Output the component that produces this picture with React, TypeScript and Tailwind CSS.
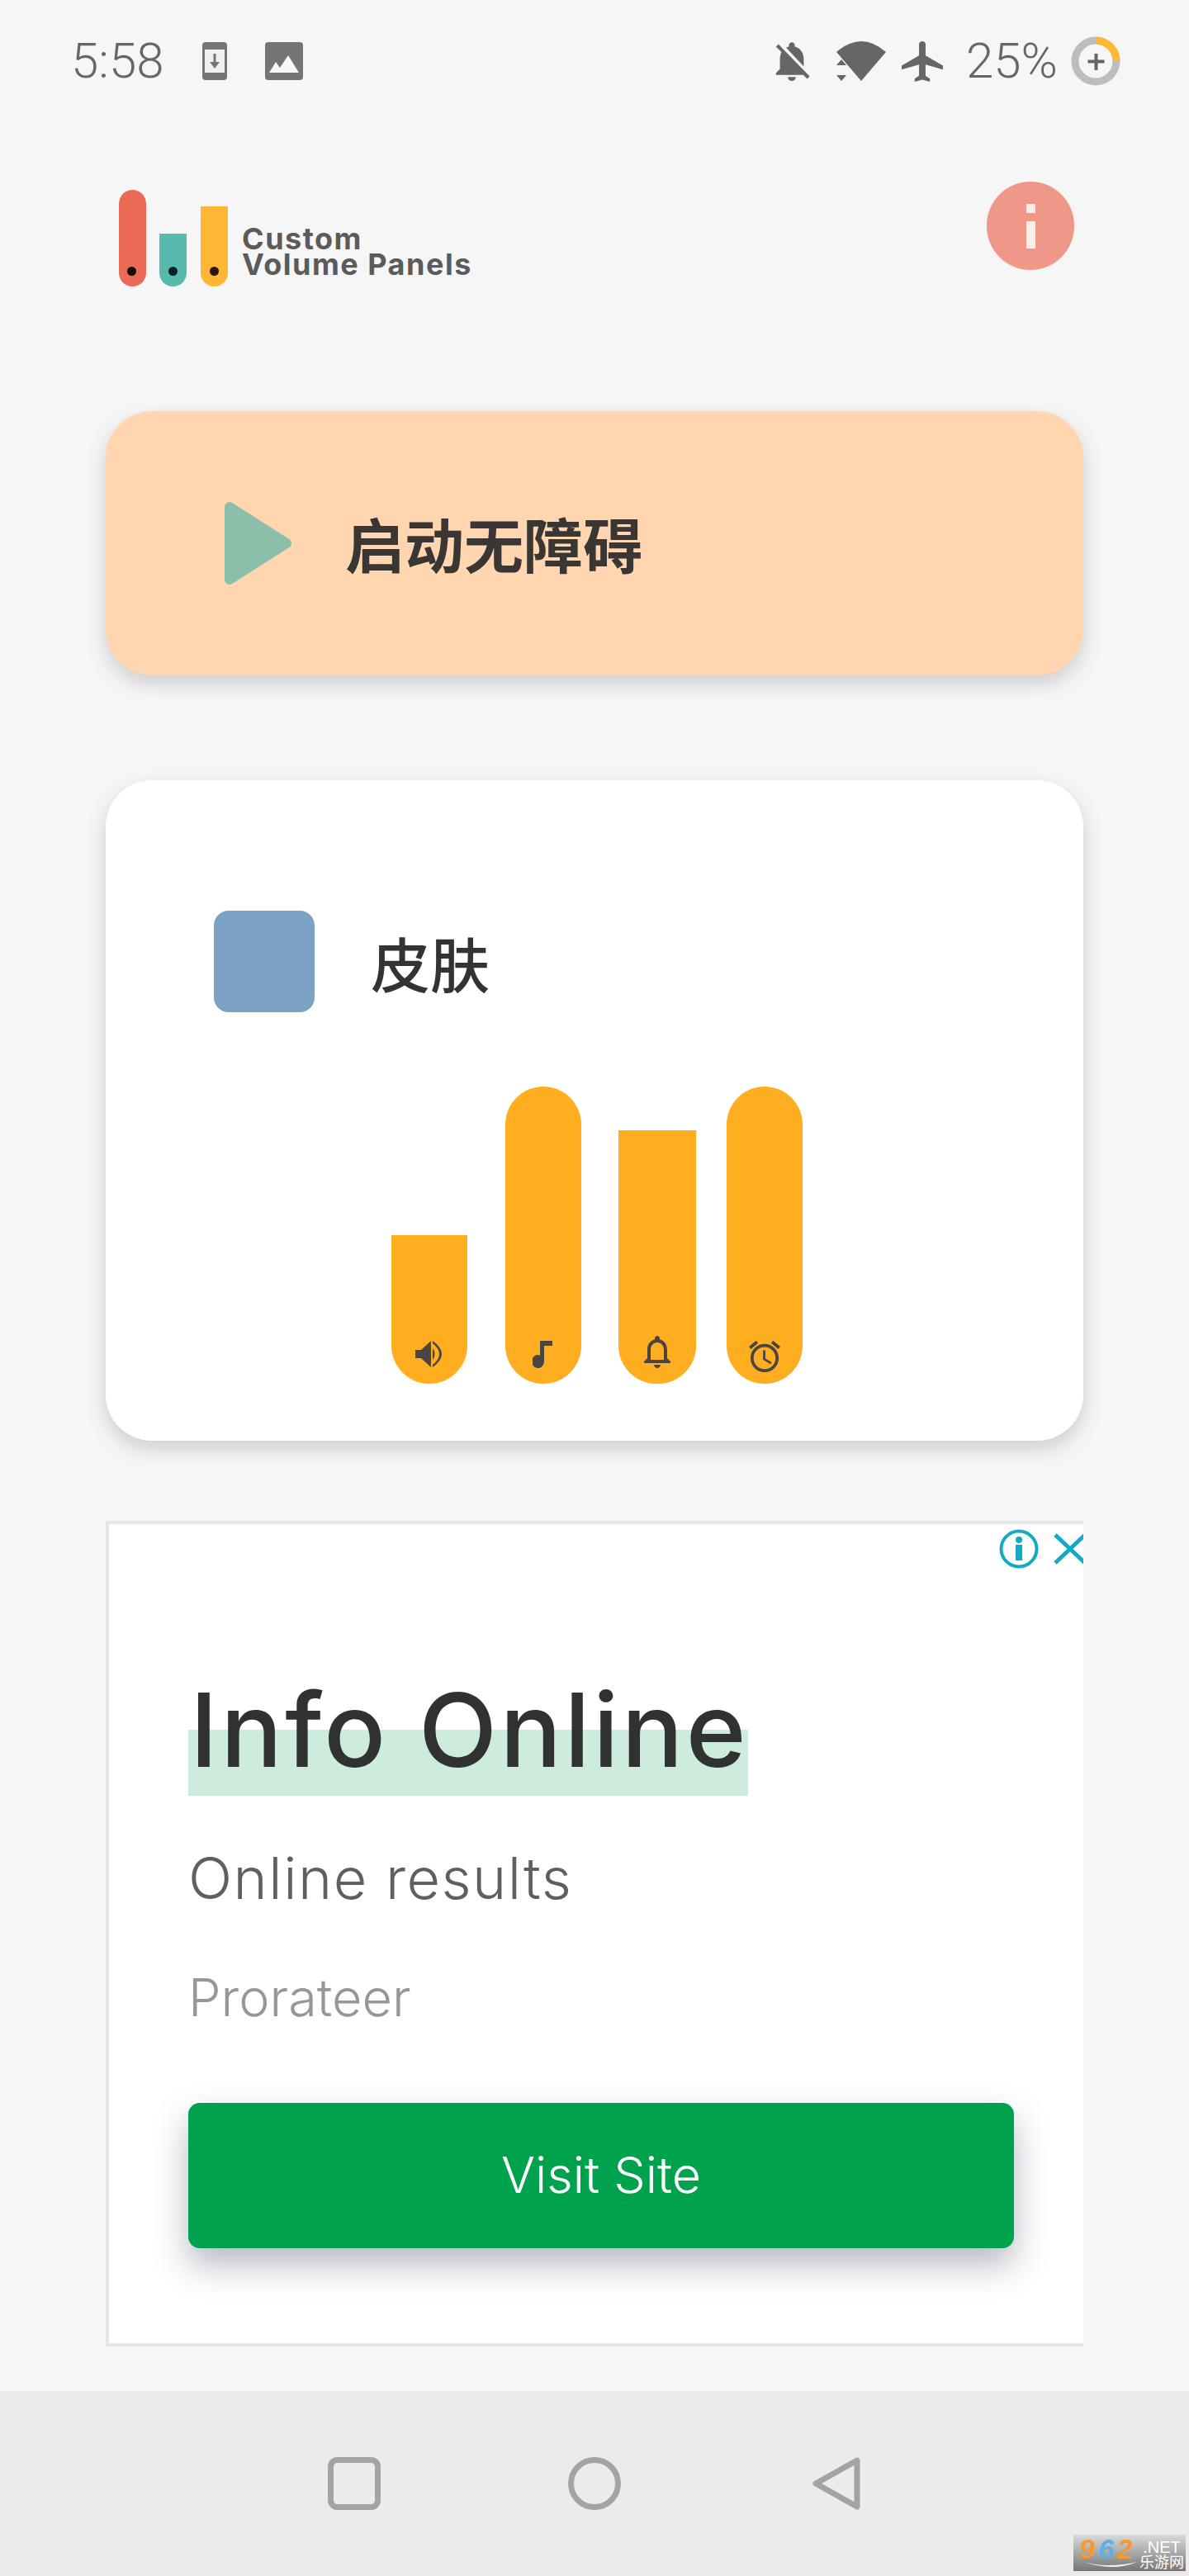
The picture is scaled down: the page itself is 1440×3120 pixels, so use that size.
const latin = "font-['Inter','Liberation_Sans',sans-serif]"

const Bar = ({ height, rounded, children, className }: { height: string; rounded: string; children: React.ReactNode; className: string }) => (
  <div className={`flex flex-col items-center justify-end bg-[#ffae1f] rounded-b-[46px] ${height} ${rounded} ${className}`}>{children}</div>
)

const StatusBar = () => (
  <div className="flex h-[148px] shrink-0 items-center pl-[86px] text-[#666666]">
    <span className="w-[111px] font-['Roboto',sans-serif] text-[60px] font-light leading-none">5:58</span>
    <svg className="ml-[48px]" width="30" height="46" viewBox="0 0 30 46">
      <rect width="30" height="46" rx="4" fill="#757575" />
      <rect x="3" y="9" width="24" height="28" fill="#f0f0f0" />
      <path d="M13.500 14h3v10h4.500L15 32l-6-8h4.500z" fill="#757575" />
    </svg>
    <svg className="ml-[46px]" width="46" height="46" viewBox="0 0 46 46">
      <rect width="46" height="46" rx="4" fill="#757575" />
      <path d="M5 37l8-13 5 7 10-15 13 21z" fill="#f7f7f7" />
    </svg>
    <svg className="ml-[568px]" width="48" height="48" viewBox="2 2 20 20" fill="#666666">
      <path d="M20 18.690L7.840 6.140 5.270 3.490 4 4.760l2.800 2.800v.01c-.52.99-.8 2.160-.8 3.420v5l-2 2v1h13.730l2 2L21 19.720l-1-1.030zM12 22c1.110 0 2-.89 2-2h-4c0 1.110.89 2 2 2zm6-7.320V11c0-3.080-1.640-5.640-4.500-6.320V4c0-.83-.67-1.500-1.500-1.500s-1.500.67-1.500 1.500v.68c-.15.03-.29.08-.42.12-.1.03-.2.07-.3.11h-.01c-.2.08-.4.17-.59.27-.01 0-.01 0-.02.01L18 14.680z" />
    </svg>
    <svg className="ml-[30px]" width="60" height="49" viewBox="0 0 60 49" fill="#666666">
      <path d="M0 13Q30 -13 60 13L30 48z" />
      <path d="M0 29h12l-6-7zM0 41h12l-6 7z" />
    </svg>
    <svg className="ml-[19px]" width="50" height="49" viewBox="2 2 19 20" preserveAspectRatio="none" fill="#666666">
      <path d="M21 16v-2l-8-5V3.500c0-.83-.67-1.500-1.500-1.500S10 2.670 10 3.500V9l-8 5v2l8-2.500V19l-2 1.500V22l3.500-1 3.500 1v-1.500L13 19v-5.500l8 2.500z" />
    </svg>
    <span className="ml-[28px] w-[110px] font-['Roboto',sans-serif] text-[60px] font-light leading-none">25%</span>
    <svg className="ml-[17px]" width="60" height="60" viewBox="0 0 60 60">
      <circle cx="30" cy="30" r="25" fill="none" stroke="#bdbdbd" strokeWidth="9" />
      <path d="M30 5A25 25 0 0 1 55 30" fill="none" stroke="#fdb935" strokeWidth="9" />
      <path d="M28.500 21h4v7.500h8v4h-8V41h-4v-8.500h-8v-4h8z" fill="#666666" />
    </svg>
  </div>
)

const Header = () => (
  <div className="flex h-[350px] shrink-0 items-start justify-between pl-[144px] pr-[139px] pt-[72px]">
    <div className="mt-[10px] flex items-end">
      <div className="relative h-[117px] w-[33px] rounded-full bg-[#ec6b56]">
        <div className="absolute bottom-[13px] left-[10px] h-[11px] w-[11px] rounded-full bg-[#180a05]" />
      </div>
      <div className="relative ml-[16px] h-[64px] w-[33px] rounded-b-full bg-[#58b9ad]">
        <div className="absolute bottom-[13px] left-[11px] h-[11px] w-[11px] rounded-full bg-[#06202a]" />
      </div>
      <div className="relative ml-[17px] h-[97px] w-[33px] rounded-b-full bg-[#fdb735]">
        <div className="absolute bottom-[13px] left-[11px] h-[11px] w-[11px] rounded-full bg-[#2a1605]" />
      </div>
      <div className={`ml-[17px] flex flex-col pb-[11px] ${latin} text-[36px] font-bold leading-[31px] tracking-[1.500px] text-[#5b5b5b]`}>
        <span className="h-[31px]">Custom</span>
        <span className="h-[31px]">Volume Panels</span>
      </div>
    </div>
    <div className="flex h-[107px] w-[106px] flex-col items-center rounded-full bg-[#f09888] pt-[27px]">
      <div className="h-[11px] w-[11px] bg-[#fbeeea]" />
      <div className="mt-[10px] h-[33px] w-[11px] bg-[#fbeeea]" />
    </div>
  </div>
)

const Watermark = () => (
  <div className="absolute bottom-[6px] right-[4px] flex h-[44px] w-[136px] bg-[linear-gradient(#dadada,#767676)] pl-[7px]">
    <div className="relative w-[73px] font-['Liberation_Sans',sans-serif] text-[34px] font-bold italic leading-[34px] tracking-[4px] text-[#f59a2d]">
      9<span className="text-[#5cb1e6]">6</span>2
      <svg className="absolute bottom-[2px] left-0" width="70" height="12" viewBox="0 0 70 12" fill="#f2f2f2">
        <path d="M0 1Q30 12 70 3Q40 16 0 1z" />
      </svg>
    </div>
    <div className="flex flex-col items-center font-['Liberation_Sans','Noto_Sans_CJK_SC',sans-serif] text-white">
      <span className="pt-[5px] text-[20px] leading-[20px]">.NET</span>
      <span className="text-[18px] leading-[18px]">乐游网</span>
    </div>
  </div>
)

export default function App() {
  return (
    <div className="relative flex h-[3120px] w-[1440px] flex-col overflow-hidden bg-[#f6f6f6]">
      <StatusBar />
      <Header />

      <div className="px-[128px]">
        <div className="flex h-[320px] items-center rounded-[56px] bg-[#ffd6b0] pl-[144px] shadow-[0_10px_24px_rgba(0,0,0,0.17)]">
          <svg width="81" height="100" viewBox="0 0 81 100">
            <path d="M6 6L75 50L6 94z" fill="#8cbfa9" stroke="#8cbfa9" strokeWidth="12" strokeLinejoin="round" />
          </svg>
          <span className="ml-[65px] mt-[-3px] font-['Noto_Sans_CJK_SC',sans-serif] text-[72px] font-bold leading-none text-[#3a3633]">启动无障碍</span>
        </div>

        <div className="mt-[127px] h-[800px] rounded-[56px] bg-white pl-[131px] pt-[158px] shadow-[0_10px_24px_rgba(0,0,0,0.17)]">
          <div className="flex items-center">
            <div className="h-[123px] w-[122px] rounded-[18px] bg-[#7ba2c4]" />
            <span className="ml-[68px] font-['Noto_Sans_CJK_SC',sans-serif] text-[72px] font-medium leading-none text-[#333333]">皮肤</span>
          </div>
          <div className="mt-[90px] flex h-[360px] items-end pl-[215px]">
            <Bar height="h-[180px]" rounded="" className="w-[92px] pb-[20px]">
              <svg width="34" height="32" viewBox="0 0 34 32" fill="#4a4540">
                <path d="M0 11h7L19 0v32L7 21H0z" />
                <path d="M21 9Q26 16 21 23z" />
                <path d="M21 0Q43 16 21 32v-3Q37 16 21 3z" />
              </svg>
            </Bar>
            <Bar height="h-[360px]" rounded="rounded-t-[46px]" className="ml-[46px] w-[92px] pb-[19px]">
              <svg className="mr-[3px]" width="24" height="33" viewBox="0 0 24 33" fill="#4a4540">
                <path d="M9 0h15v6H14v19a7.500 8 0 1 1-5-7.500z" />
              </svg>
            </Bar>
            <Bar height="h-[307px]" rounded="" className="ml-[45px] w-[94px] pb-[17px]">
              <svg width="36" height="42" viewBox="3 2 18 21" fill="#4a4540">
                <path d="M12 22c1.100 0 2-.9 2-2h-4c0 1.100.9 2 2 2zm6-6v-5c0-3.070-1.630-5.640-4.500-6.320V4c0-.83-.67-1.500-1.500-1.500s-1.500.67-1.500 1.500v.68C7.640 5.360 6 7.920 6 11v5l-2 2v1h16v-1l-2-2zm-2 1H8v-6c0-2.480 1.510-4.500 4-4.500s4 2.020 4 4.500v6z" />
              </svg>
            </Bar>
            <Bar height="h-[360px]" rounded="rounded-t-[46px]" className="ml-[37px] w-[92px] pb-[14px]">
              <svg width="38" height="38" viewBox="2 2 20 20" fill="#4a4540">
                <path d="M22 5.720l-4.600-3.860-1.290 1.530 4.600 3.860L22 5.720zM7.880 3.390L6.600 1.860 2 5.710l1.290 1.530 4.590-3.850zM12.500 8H11v6l4.750 2.850.75-1.230-4-2.370V8zM12 4c-4.970 0-9 4.030-9 9s4.020 9 9 9c4.970 0 9-4.030 9-9s-4.030-9-9-9zm0 16c-3.870 0-7-3.130-7-7s3.130-7 7-7 7 3.130 7 7-3.130 7-7 7z" />
              </svg>
            </Bar>
          </div>
        </div>

        <div className={`mt-[97px] h-[1000px] overflow-hidden border-y-[4px] border-l-[4px] border-[#e6e6e6] bg-white pl-[96px] ${latin}`}>
          <div className="flex h-[64px] items-start justify-end pt-[6px]">
            <svg width="48" height="48" viewBox="0 0 48 48" fill="none">
              <circle cx="24" cy="24" r="21.500" stroke="#14a9c4" strokeWidth="4" />
              <circle cx="24" cy="13" r="4" fill="#14a9c4" />
              <rect x="20" y="19" width="8" height="19" fill="#14a9c4" />
            </svg>
            <svg className="ml-[18px] mt-[5px]" width="36" height="38" viewBox="0 0 36 38" fill="none">
              <path d="M2 2L38 36M38 2L2 36" stroke="#14a9c4" strokeWidth="5" />
            </svg>
          </div>
          <div className="mt-[132px] flex h-[133px] w-[678px] items-start bg-[linear-gradient(transparent_53px,#ceecdd_53px)] pl-[2px]">
            <span className="mt-[-22px] whitespace-nowrap text-[124px] font-medium leading-[150px] tracking-[3.400px] text-[#2f322f]">Info Online</span>
          </div>
          <div className="mt-[58px] text-[70px] font-light leading-[84px] tracking-[1.500px] text-[#5f5f5f]">Online results</div>
          <div className="mt-[64px] text-[63px] font-light leading-[76px] text-[#979797]">Prorateer</div>
          <div className="mt-[90px] flex h-[176px] w-[1000px] items-center justify-center rounded-[14px] bg-[#00a24d] text-[61px] font-light text-white shadow-[0_20px_40px_rgba(50,55,90,0.35)]">
            Visit Site
          </div>
        </div>
      </div>

      <div className="mt-[54px] flex flex-1 items-start bg-[#ebebeb] pl-[397px] pt-[80px]">
        <svg width="64" height="64" viewBox="0 0 64 64" fill="none">
          <rect x="3.500" y="3.500" width="57" height="57" rx="8" stroke="#a3a3a3" strokeWidth="7" />
        </svg>
        <svg className="ml-[227px]" width="64" height="64" viewBox="0 0 64 64" fill="none">
          <circle cx="32" cy="32" r="28.500" stroke="#a3a3a3" strokeWidth="7" />
        </svg>
        <svg className="ml-[232px]" width="58" height="64" viewBox="0 0 58 64" fill="none">
          <path d="M54 4L4 32L54 60z" stroke="#a3a3a3" strokeWidth="7" strokeLinejoin="round" />
        </svg>
      </div>
      <Watermark />
    </div>
  )
}
